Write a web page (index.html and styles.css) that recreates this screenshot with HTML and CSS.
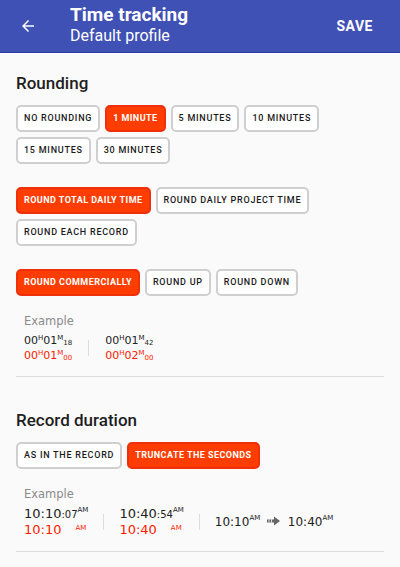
FILE: index.html
```html
<!DOCTYPE html>
<html lang="en">
<head>
    <meta charset="UTF-8">
    <meta name="viewport" content="width=device-width, initial-scale=1.0">
    <title>Time tracking</title>
    <link rel="stylesheet" href="styles.css">
</head>
<body>
    <div class="toolbar">
        <svg class="back" width="18" height="18" viewBox="0 0 24 24">
            <path d="M20 11H7.83l5.59-5.59L12 4l-8 8 8 8 1.41-1.41L7.83 13H20v-2z" fill="#fff"/>
        </svg>
        <div class="titles">
            <div class="title">Time tracking</div>
            <div class="subtitle">Default profile</div>
        </div>
        <div class="save">SAVE</div>
    </div>

    <div class="content">
        <div class="section">
            <h2>Rounding</h2>
            <div class="chips">
                <span class="chip">No rounding</span>
                <span class="chip active">1 minute</span>
                <span class="chip">5 minutes</span>
                <span class="chip">10 minutes</span>
                <span class="chip">15 minutes</span>
                <span class="chip">30 minutes</span>
            </div>
            <div class="chips spaced">
                <span class="chip active">Round total daily time</span>
                <span class="chip">Round daily project time</span>
                <span class="chip">Round each record</span>
            </div>
            <div class="chips spaced">
                <span class="chip active">Round commercially</span>
                <span class="chip">Round up</span>
                <span class="chip">Round down</span>
            </div>
            <div class="example">
                <div class="example-label">Example</div>
                <div class="example-row">
                    <div class="col">
                        <div class="line">00<sup>H</sup>01<sup>M</sup><sub>18</sub></div>
                        <div class="line red">00<sup>H</sup>01<sup>M</sup><sub>00</sub></div>
                    </div>
                    <div class="sep"></div>
                    <div class="col">
                        <div class="line">00<sup>H</sup>01<sup>M</sup><sub>42</sub></div>
                        <div class="line red">00<sup>H</sup>02<sup>M</sup><sub>00</sub></div>
                    </div>
                </div>
            </div>
        </div>

        <div class="section second">
            <h2>Record duration</h2>
            <div class="chips">
                <span class="chip">As in the record</span>
                <span class="chip active">Truncate the seconds</span>
            </div>
            <div class="example">
                <div class="example-label">Example</div>
                <div class="example-row big">
                    <div class="col">
                        <div class="line">10:10<small>:07</small><sup>AM</sup></div>
                        <div class="line red">10:10<span class="gap"></span><sup>AM</sup></div>
                    </div>
                    <div class="sep"></div>
                    <div class="col">
                        <div class="line">10:40<small>:54</small><sup>AM</sup></div>
                        <div class="line red">10:40<span class="gap"></span><sup>AM</sup></div>
                    </div>
                    <div class="sep"></div>
                    <div class="col single">
                        10:10<sup>AM</sup>
                        <svg class="arrow" width="14" height="10" viewBox="0 0 14 10">
                            <path d="M0 3.5h7v-3l6 4.5-6 4.5v-3h-7z" fill="#666"/>
                            <path d="M2 3.5v3M4.5 3.5v3" stroke="#fafafa" stroke-width="0.8"/>
                        </svg>
                        10:40<sup>AM</sup>
                    </div>
                </div>
            </div>
        </div>
    </div>
</body>
</html>
```

FILE: styles.css
```css
body {
    margin: 0;
    background-color: #fafafa;
    font-family: Roboto, "Liberation Sans", Arial, sans-serif;
    color: #212121;
}
.toolbar {
    height: 52px;
    background-color: #3f51b5;
    border-bottom: 1px solid #2a3aa0;
    display: flex;
    align-items: center;
    color: white;
}
.back {
    margin-left: 19px;
    margin-right: 33px;
}
.titles {
    flex: 1;
}
.title {
    font-size: 19px;
    font-weight: bold;
    line-height: 22px;
    margin-top: -2px;
}
.subtitle {
    font-size: 16px;
    line-height: 20px;
}
.save {
    font-size: 14px;
    font-weight: bold;
    letter-spacing: 0.5px;
    margin-right: 27px;
}
.content {
    padding: 0 16px;
}
.section {
    border-bottom: 1px solid #dcdcdc;
}
h2 {
    font-size: 17px;
    font-weight: 500;
    margin: 0;
    padding-top: 20px;
    line-height: 20px;
    color: #1e1e1e;
}
.second h2 {
    padding-top: 33px;
}
.chips {
    display: flex;
    flex-wrap: wrap;
    gap: 5px 5px;
    margin-top: 12px;
}
.chips.spaced {
    margin-top: 23px;
}
.chip {
    display: inline-block;
    height: 23px;
    line-height: 23px;
    padding: 0 6px;
    border: 2px solid #cfcfcf;
    border-radius: 5px;
    background: white;
    font-size: 9px;
    font-weight: 500;
    letter-spacing: 0.75px;
    text-transform: uppercase;
    color: #1a1a1a;
}
.chip.active {
    background: #ff3d00;
    border-color: #f0300a;
    color: white;
    font-weight: bold;
    letter-spacing: 0.45px;
}
.example {
    padding: 18px 8px 13px;
    font-family: "DejaVu Sans", sans-serif;
}
.example-label {
    font-size: 11.5px;
    color: #8a8a8a;
    line-height: 14px;
}
.example-row {
    display: flex;
    align-items: center;
    font-size: 11px;
    margin-top: 5px;
}
.example-row .col {
    white-space: nowrap;
}
.line {
    height: 15px;
    line-height: 15px;
}
.example-row sup {
    font-size: 7px;
    vertical-align: 4px;
    line-height: 0;
}
.example-row sub {
    font-size: 7px;
    vertical-align: -1px;
    line-height: 0;
}
.red {
    color: #ff1a00;
}
.sep {
    width: 1px;
    height: 16px;
    background: #dcdcdc;
    margin: 0 16px;
}
.example-row.big {
    font-size: 13px;
    margin-top: 5px;
}
.example-row.big .sep {
    margin: 0 15px;
}
.example-row.big .line {
    height: 16px;
    line-height: 16px;
}
.example-row.big small {
    font-size: 10px;
}
.example-row.big sup {
    font-size: 7px;
    vertical-align: 6px;
}
.example-row.big .gap {
    display: inline-block;
    width: 14px;
}
.example-row.big .red sup {
    vertical-align: 4px;
}
.col.single {
    font-size: 12px;
}
.arrow {
    margin: 0 3px;
}
```
